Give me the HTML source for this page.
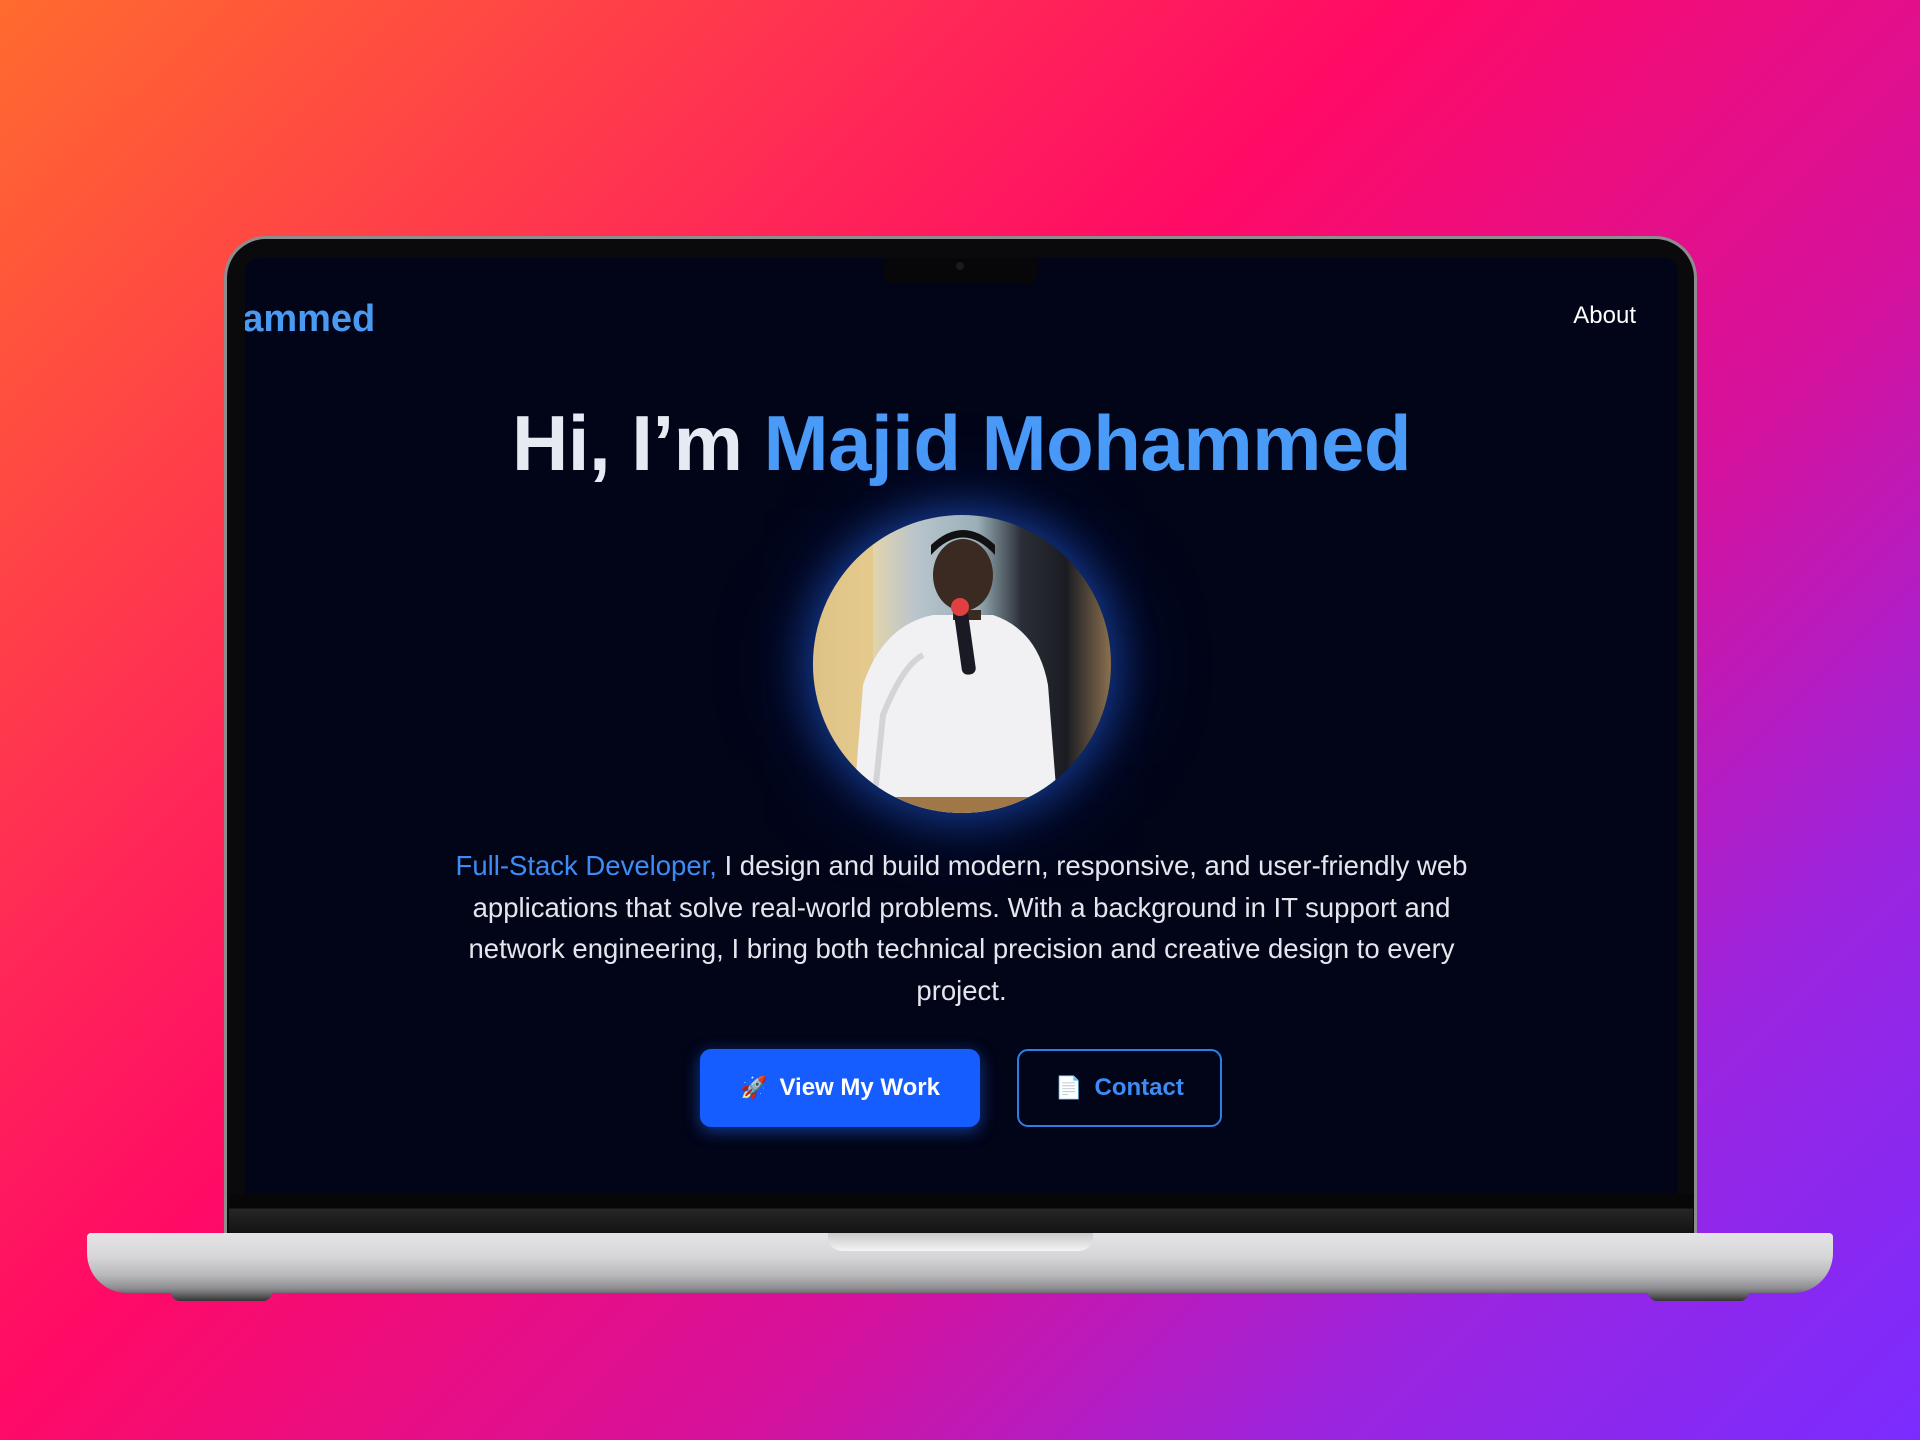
<!DOCTYPE html>
<html><head><meta charset="utf-8"><style>
*{margin:0;padding:0;box-sizing:border-box}
body{width:1920px;height:1440px;overflow:hidden;position:relative;font-family:"Liberation Sans",sans-serif;
background:linear-gradient(135deg,#ff6b2e 0%,#ff2a55 28%,#ff0a66 42%,#d4129e 65%,#9a25e0 82%,#7a2cff 100%);}
.lid{position:absolute;left:224px;top:236px;width:1473px;height:1000px;border-radius:42px 42px 0 0;background:#0a0a0c;border:3px solid #8d8d90;border-bottom:none}
.screen{position:absolute;left:245px;top:258px;width:1433px;height:936px;background:#020518;border-radius:14px 14px 0 0;overflow:hidden}
.band{position:absolute;left:229px;top:1194px;width:1464px;height:40px;background:linear-gradient(#070707 0,#070707 14px,#262626 15px,#121212 100%)}
.notch{position:absolute;left:884px;top:258px;width:153px;height:26px;background:#07070a;border-radius:0 0 10px 10px}
.notch i{position:absolute;left:72px;top:4px;width:8px;height:8px;border-radius:50%;background:#1a1a22}
.base{position:absolute;left:87px;top:1233px;width:1746px;height:60px;border-radius:4px 4px 40px 40px;background:linear-gradient(#e4e4e6 0%,#d6d6d8 40%,#b9b9bc 70%,#8e8e92 92%,#6e6e72 100%)}
.tp{position:absolute;left:828px;top:1233px;width:265px;height:18px;border-radius:0 0 14px 14px;background:linear-gradient(#c9c9cb,#f4f4f4)}
.foot{position:absolute;top:1292px;width:101px;height:9px;border-radius:0 0 10px 10px;background:linear-gradient(#777,#333)}
.logo{position:absolute;left:-26px;top:40px;font-size:38px;font-weight:bold;color:#4a9af2}
.about{position:absolute;right:42px;top:44px;font-size:24px;color:#fff}
h1{position:absolute;left:0;width:100%;top:140px;text-align:center;font-size:78px;letter-spacing:-0.5px;color:#e6eaf2;font-weight:bold}
h1 span{color:#4a9af8}
.photo{position:absolute;left:568px;top:257px;width:298px;height:298px;border-radius:50%;overflow:hidden;
box-shadow:0 0 40px 8px rgba(40,110,255,.45),0 0 90px 20px rgba(30,80,220,.18);
background:linear-gradient(90deg,#d6c49a 0%,#e8d6a8 18%,#b8c4cc 35%,#9ab0b8 55%,#2a2e36 70%,#1a1c22 85%,#8a7050 100%)}
.p{position:absolute;left:0;width:100%;top:587px;text-align:center;font-size:27.5px;line-height:41.7px;color:#e4e6ee}
.p span{color:#3d8cf5}
.btn{position:absolute;top:791px;height:78px;border-radius:11px;font-size:24px;font-weight:bold;display:flex;align-items:center;justify-content:center;gap:12px}
.b1{left:455px;width:280px;background:#165dff;color:#fff;box-shadow:0 4px 16px rgba(30,100,255,.55)}
.b2{left:772px;width:205px;border:2px solid #2f7ee8;color:#3d8cf5}
</style></head><body>
<div class="lid"></div>
<div class="screen">
  <div class="logo">hammed</div>
  <div class="about">About</div>
  <h1>Hi, I’m <span>Majid Mohammed</span></h1>
  <div class="photo">
    <svg width="298" height="298" viewBox="0 0 298 298">
      <rect x="0" y="0" width="60" height="298" fill="#e2c27a" opacity=".6"/>
      <path d="M40 298 L50 170 Q70 110 120 100 L180 100 Q225 115 235 170 L245 298Z" fill="#f1f1f3"/>
      <path d="M60 298 L70 200 Q90 150 110 140" stroke="#d4d4d8" stroke-width="6" fill="none"/>
      <ellipse cx="150" cy="60" rx="30" ry="36" fill="#3a2a22"/>
      <path d="M118 40 Q150 5 182 40 L182 30 Q150 0 118 30Z" fill="#111"/>
      <rect x="140" y="95" width="28" height="10" fill="#3a2a22"/>
      <rect x="144" y="95" width="14" height="65" rx="6" fill="#1a1a24" transform="rotate(-8 150 120)"/>
      <circle cx="147" cy="92" r="9" fill="#e04040"/>
      <rect x="60" y="282" width="180" height="16" fill="#a07848"/>
    </svg>
  </div>
  <div class="p"><span>Full-Stack Developer,</span> I design and build modern, responsive, and user-friendly web<br>applications that solve real-world problems. With a background in IT support and<br>network engineering, I bring both technical precision and creative design to every<br>project.</div>
  <div class="btn b1"><span style="font-size:22px">🚀</span>View My Work</div>
  <div class="btn b2"><span style="font-size:22px;color:#ddd">📄</span>Contact</div>
</div>
<div class="notch"><i></i></div>
<div class="band"></div>
<div class="base"></div>
<div class="tp"></div>
<div class="foot" style="left:171px"></div>
<div class="foot" style="left:1648px"></div>
</body></html>
